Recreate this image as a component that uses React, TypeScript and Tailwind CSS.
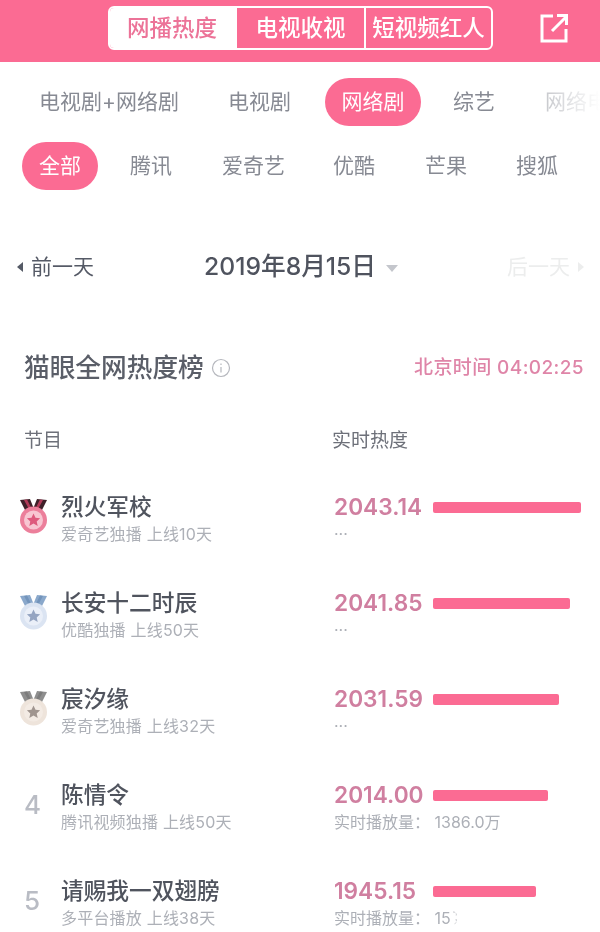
const font = '[font-family:Inter,"Noto_Sans_CJK_SC",sans-serif]'

type Medal = { ribbon: string; ribbonDark: string; rim: string; face: string; star: string }

const medals: Medal[] = [
  { ribbon: '#3f2029', ribbonDark: '#b23a58', rim: '#ec7f9b', face: '#f8c6d2', star: '#de5a7d' },
  { ribbon: '#8aa8cb', ribbonDark: '#7394bb', rim: '#dbe4f2', face: '#eaeff8', star: '#95a5c2' },
  { ribbon: '#8e8e8e', ribbonDark: '#7c7c7c', rim: '#eee4db', face: '#f3ebe4', star: '#a0958f' },
]

const rows = [
  { name: '烈火军校', sub: '爱奇艺独播 上线10天', value: '2043.14', bar: 148, note: '···' },
  { name: '长安十二时辰', sub: '优酷独播 上线50天', value: '2041.85', bar: 137, note: '···' },
  { name: '宸汐缘', sub: '爱奇艺独播 上线32天', value: '2031.59', bar: 126, note: '···' },
  { name: '陈情令', sub: '腾讯视频独播 上线50天', value: '2014.00', bar: 115, note: '实时播放量： 1386.0万' },
  { name: '请赐我一双翅膀', sub: '多平台播放 上线38天', value: '1945.15', bar: 103, note: '实时播放量： 15' },
]

const MedalIcon = ({ m }: { m: Medal }) => (
  <svg width="27" height="35" viewBox="0 0 27 35">
    <path d="M0 1l10-1 4 10-8 3z" fill={m.ribbon} />
    <path d="M27 1l-10-1-4 10 8 3z" fill={m.ribbon} />
    <path d="M4 1l3-.5 5 10-2 1.500z" fill={m.ribbonDark} />
    <path d="M23 1l-3-.5-5 10 2 1.500z" fill={m.ribbonDark} />
    <circle cx="13.500" cy="21" r="13.500" fill={m.rim} />
    <circle cx="13.500" cy="21" r="9.500" fill={m.face} />
    <path
      d="M13.500 14.500l2 4.300 4.600.5-3.400 3.100 1 4.600-4.200-2.400-4.200 2.400 1-4.600-3.400-3.100 4.600-.5z"
      fill={m.star}
    />
  </svg>
)

const App = () => {
  return (
    <div className={`h-[932px] w-[600px] overflow-hidden bg-white blur-[0.4px] ${font}`}>
      <header className="flex h-[62px] items-center bg-[#fb6b93] pb-[6px]">
        <div className="ml-[108px] flex h-[44px] w-[385px] overflow-hidden rounded-[6px] border-2 border-white text-[22.500px] leading-none font-medium">
          <div className="flex w-[127px] items-center justify-center bg-white pr-[3px] text-[#ec7398]">网播热度</div>
          <div className="flex w-[129px] items-center justify-center border-r-2 border-white text-white">电视收视</div>
          <div className="flex flex-1 items-center justify-center text-white">短视频红人</div>
        </div>
        <svg className="ml-[46px]" width="30" height="30" viewBox="0 0 30 30" fill="none" stroke="white" strokeWidth="3">
          <path d="M14 3H3v25h24V16" />
          <path d="M13 18L27 4" />
          <path d="M18 2.500h9.500V12" />
        </svg>
      </header>

      <div className="relative mt-4 flex h-12 items-center overflow-hidden whitespace-nowrap text-[21px] text-[#878a93]">
        <span className="ml-[39px] shrink-0">电视剧+网络剧</span>
        <span className="ml-[49px] shrink-0">电视剧</span>
        <span className="ml-[34px] flex h-12 w-24 shrink-0 items-center justify-center rounded-full bg-[#fb6b93] text-white">网络剧</span>
        <span className="ml-8 shrink-0">综艺</span>
        <span className="ml-[50px] shrink-0">网络电影</span>
        <div className="absolute top-0 right-0 h-12 w-[60px] bg-gradient-to-l from-white to-white/50" />
      </div>

      <div className="mt-4 flex h-12 items-center whitespace-nowrap text-[21px] text-[#878a93]">
        <span className="ml-[22px] flex h-12 w-[76px] items-center justify-center rounded-full bg-[#fb6b93] text-white">全部</span>
        <span className="ml-8">腾讯</span>
        <span className="ml-[50px]">爱奇艺</span>
        <span className="ml-[48px]">优酷</span>
        <span className="ml-[50px]">芒果</span>
        <span className="ml-[49px]">搜狐</span>
      </div>

      <div className="mt-[62px] flex h-[30px] items-center whitespace-nowrap">
        <span className="ml-[17px] h-0 w-0 border-y-[5px] border-r-[6px] border-y-transparent border-r-[#555a66]" />
        <span className="ml-2 text-[21px] text-[#555a66]">前一天</span>
        <span className="ml-[110px] text-[24.700px] font-medium text-[#4f535e]">2019年8月15日</span>
        <span className="mt-[2px] ml-[10px] h-0 w-0 border-x-[6px] border-t-[7px] border-x-transparent border-t-[#c4c6cc]" />
        <span className="ml-[109px] text-[21px] text-[#eceded]">后一天</span>
        <span className="ml-2 h-0 w-0 border-y-[5px] border-l-[6px] border-y-transparent border-l-[#eceded]" />
      </div>

      <div className="mt-[71px] flex h-[30px] items-center justify-between pr-[16px] pl-[24px] whitespace-nowrap">
        <div className="flex items-center">
          <span className="text-[25.700px] font-medium text-[#5a5e68]">猫眼全网热度榜</span>
          <svg className="ml-[7px]" width="20" height="20" viewBox="0 0 20 20" fill="none" stroke="#b5b7bd" strokeWidth="1.200">
            <circle cx="10" cy="10" r="8.500" />
            <path d="M10 9v5.500M10 5.500v1.500" />
          </svg>
        </div>
        <span className="text-[19px] font-medium tracking-[0.4px] text-[#df85a8]">北京时间 04:02:25</span>
      </div>

      <div className="mt-[46px] flex h-6 items-center pl-[24px] text-[19px] text-[#6d7079]">
        <span className="w-[308px]">节目</span>
        <span>实时热度</span>
      </div>

      <div className="mt-[39px]">
        {rows.map((row, i) => (
          <div key={row.name} className="flex h-24 items-start whitespace-nowrap">
            <div className="flex h-[48px] w-[61px] items-center pl-[20px]">
              {i < 3 ? (
                <MedalIcon m={medals[i]} />
              ) : (
                <span className="w-7 pl-[4px] text-[26px] font-medium text-[#b9bcc4]">{i + 1}</span>
              )}
            </div>
            <div className="w-[273px]">
              <div className="h-[30px] text-[22.700px] leading-[30px] font-medium text-[#50545e]">{row.name}</div>
              <div className="h-[24px] text-[16px] leading-[24px] tracking-[0.2px] text-[#adb0b7]">{row.sub}</div>
            </div>
            <div>
              <div className="flex h-[30px] items-center">
                <span className="w-[99px] text-[22.700px] font-semibold text-[#d07fa0]">{row.value}</span>
                <div className="h-[11px] rounded-[2px] bg-[#fb6b93]" style={{ width: row.bar }} />
              </div>
              <div className="flex h-[24px] items-center text-[16px] text-[#adb0b7]">
                {row.note}
                {i === 4 && (
                  <svg className="ml-[1px]" width="6" height="16" viewBox="0 0 6 16" fill="none" stroke="#c5c7cc" strokeWidth="1" strokeDasharray="2 1.500">
                    <path d="M1 2c3 0 4 2 3 4M4 9c1 3 0 5-3 5" />
                  </svg>
                )}
              </div>
            </div>
          </div>
        ))}
      </div>
    </div>
  )
}

export default App
